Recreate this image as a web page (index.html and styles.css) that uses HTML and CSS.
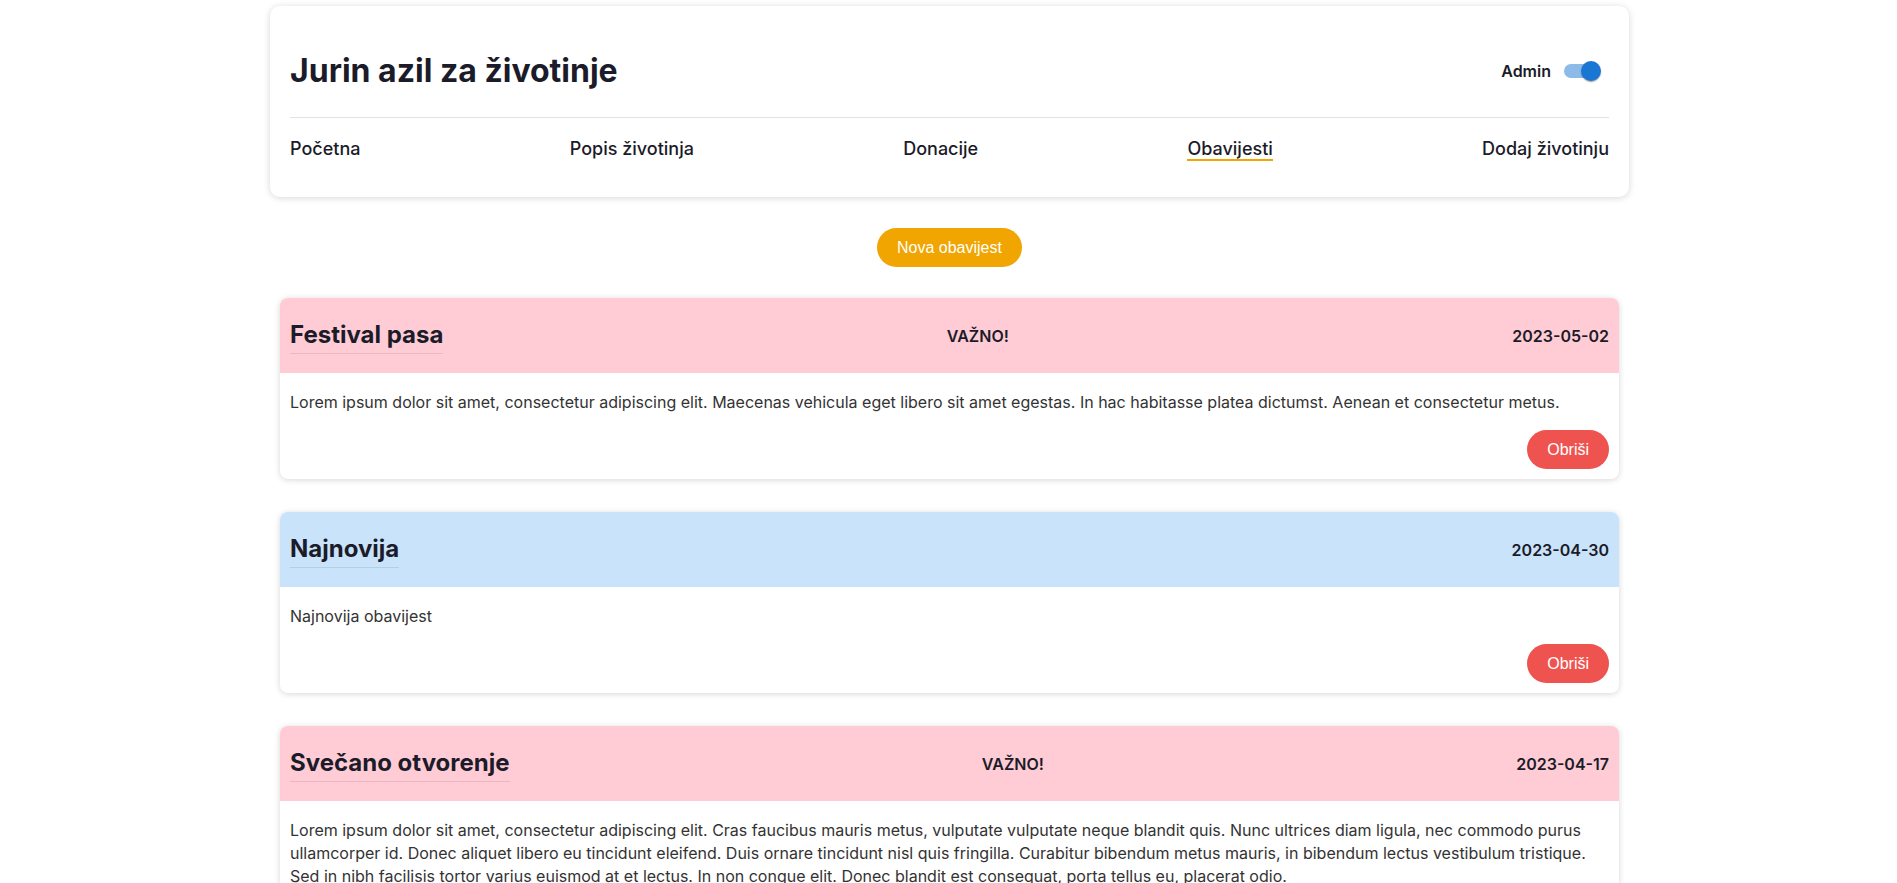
FILE: index.html
```html
<!DOCTYPE html>
<html lang="hr">
<head>
<meta charset="utf-8">
<title>Jurin azil za životinje</title>
<link rel="stylesheet" href="styles.css">
</head>
<body>
<header class="site-header">
  <div class="header-top">
    <h1 class="site-title">Jurin azil za životinje</h1>
    <label class="admin-toggle">
      <span class="admin-label">Admin</span>
      <span class="switch"><span class="switch-thumb"></span></span>
    </label>
  </div>
  <nav class="main-nav">
    <a class="nav-link" href="#">Početna</a>
    <a class="nav-link" href="#">Popis životinja</a>
    <a class="nav-link" href="#">Donacije</a>
    <a class="nav-link active" href="#">Obavijesti</a>
    <a class="nav-link" href="#">Dodaj životinju</a>
  </nav>
</header>

<main class="content">
  <div class="actions">
    <button class="btn btn-new">Nova obavijest</button>
  </div>

  <section class="notices">
    <article class="notice">
      <div class="notice-head important">
        <h2 class="notice-title">Festival pasa</h2>
        <span class="notice-flag">VAŽNO!</span>
        <span class="notice-date">2023-05-02</span>
      </div>
      <div class="notice-body">
        <p class="notice-text">Lorem ipsum dolor sit amet, consectetur adipiscing elit. Maecenas vehicula eget libero sit amet egestas. In hac habitasse platea dictumst. Aenean et consectetur metus.</p>
        <button class="btn btn-delete">Obriši</button>
      </div>
    </article>

    <article class="notice">
      <div class="notice-head normal">
        <h2 class="notice-title">Najnovija</h2>
        <span class="notice-date">2023-04-30</span>
      </div>
      <div class="notice-body">
        <p class="notice-text">Najnovija obavijest</p>
        <button class="btn btn-delete">Obriši</button>
      </div>
    </article>

    <article class="notice">
      <div class="notice-head important">
        <h2 class="notice-title">Svečano otvorenje</h2>
        <span class="notice-flag">VAŽNO!</span>
        <span class="notice-date">2023-04-17</span>
      </div>
      <div class="notice-body">
        <p class="notice-text">Lorem ipsum dolor sit amet, consectetur adipiscing elit. Cras faucibus mauris metus, vulputate vulputate neque blandit quis. Nunc ultrices diam ligula, nec commodo purus ullamcorper id. Donec aliquet libero eu tincidunt eleifend. Duis ornare tincidunt nisl quis fringilla. Curabitur bibendum metus mauris, in bibendum lectus vestibulum tristique. Sed in nibh facilisis tortor varius euismod at et lectus. In non congue elit. Donec blandit est consequat, porta tellus eu, placerat odio.</p>
        <button class="btn btn-delete">Obriši</button>
      </div>
    </article>
  </section>
</main>
</body>
</html>
```

FILE: styles.css
```css
* {
  box-sizing: border-box;
}

html, body {
  margin: 0;
  padding: 0;
  background: #ffffff;
}

body {
  font-family: Inter, "Noto Sans", "DejaVu Sans", sans-serif;
  color: #1b1b29;
  padding: 6px 0 0 2px;
}

/* ---------- header card ---------- */
.site-header {
  width: 1359px;
  margin: 0 auto;
  padding: 0 20px;
  background: #fff;
  border-radius: 10px;
  box-shadow: 0 1px 7px rgba(0, 0, 0, 0.16);
}

.header-top {
  display: flex;
  align-items: center;
  justify-content: space-between;
  padding: 45px 0 27px;
}

.site-title {
  margin: 0;
  font-size: 32px;
  font-weight: 700;
  line-height: normal;
  color: #1b1b29;
}

.admin-toggle {
  display: flex;
  align-items: center;
  gap: 13px;
  margin-right: 11px;
  cursor: pointer;
}

.admin-label {
  font-size: 16px;
  font-weight: 600;
  color: #1b1b29;
}

.switch {
  display: flex;
  align-items: center;
  justify-content: flex-end;
  width: 34px;
  height: 14px;
  border-radius: 7px;
  background: #8cbbe9;
}

.switch-thumb {
  width: 20px;
  height: 20px;
  margin-right: -3px;
  border-radius: 50%;
  background: #1976d2;
  box-shadow: 0 2px 1px -1px rgba(0,0,0,0.2), 0 1px 1px 0 rgba(0,0,0,0.14), 0 1px 3px 0 rgba(0,0,0,0.12);
}

.main-nav {
  display: flex;
  justify-content: space-between;
  border-top: 1px solid #e2e2e2;
  padding: 20px 0 36px;
}

.nav-link {
  font-size: 18px;
  font-weight: 500;
  line-height: normal;
  color: #1b1b29;
  text-decoration: none;
  border-bottom: 2px solid transparent;
}

.nav-link.active {
  border-bottom-color: #f0a500;
}

/* ---------- content ---------- */
.content {
  width: 1359px;
  margin: 0 auto;
}

.actions {
  display: flex;
  justify-content: center;
  margin-top: 31px;
}

.btn {
  font-family: "Liberation Sans", Arial, sans-serif;
  font-size: 16px;
  line-height: 19px;
  color: #fff;
  border: none;
  border-radius: 20px;
  padding: 10px 20px;
  cursor: pointer;
}

.btn-new {
  background: #f0a500;
}

.btn-delete {
  background: #ef5350;
  align-self: flex-end;
}

.notices {
  display: flex;
  flex-direction: column;
  gap: 33px;
  margin: 31px 10px 40px 10px;
}

.notice {
  background: #fff;
  border-radius: 8px;
  overflow: hidden;
  box-shadow: 0 1px 6px rgba(0, 0, 0, 0.16);
}

.notice-head {
  display: flex;
  align-items: center;
  justify-content: space-between;
  height: 75px;
  padding: 0 10px;
}

.notice-head.important {
  background: #ffccd5;
}

.notice-head.normal {
  background: #c9e3fb;
}

.notice-title {
  margin: 2px 0 0;
  padding-bottom: 4px;
  font-size: 24px;
  font-weight: 700;
  line-height: normal;
  color: #1b1b29;
  border-bottom: 1px solid rgba(0, 0, 0, 0.09);
}

.notice-flag,
.notice-date {
  font-size: 16px;
  font-weight: 600;
  color: #1b1b29;
}

.notice-body {
  display: flex;
  flex-direction: column;
  padding: 18px 10px 10px;
}

.notice-text {
  margin: 0 0 16px;
  font-size: 16px;
  line-height: 23px;
  color: #333333;
}
```
